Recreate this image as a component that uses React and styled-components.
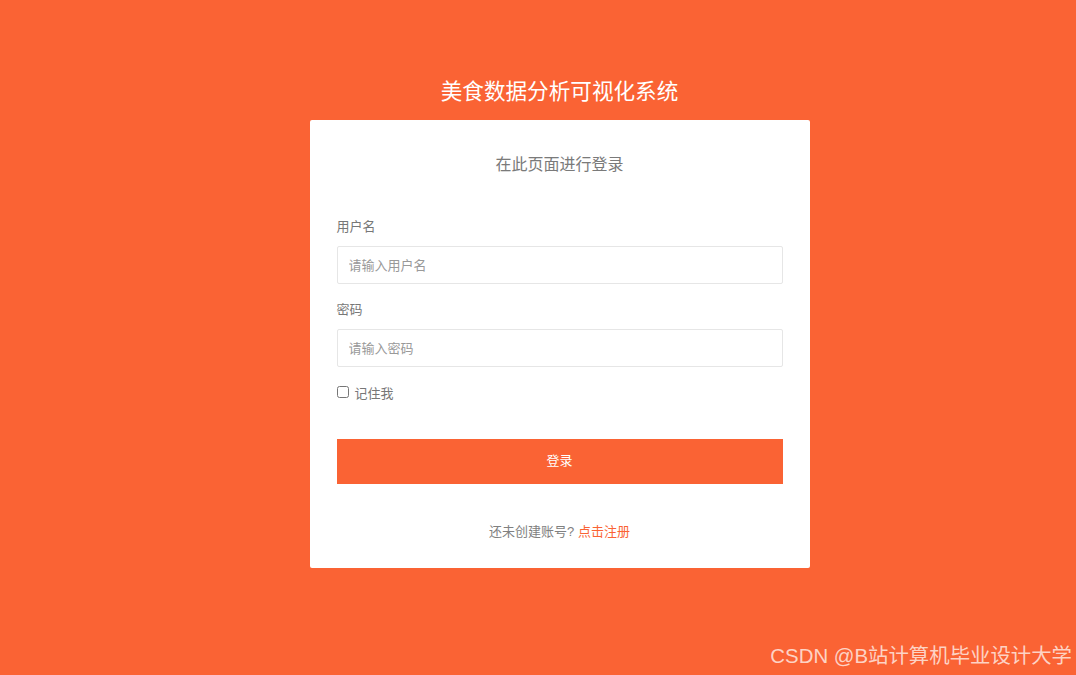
import React, { useState } from 'react';
import styled, { createGlobalStyle } from 'styled-components';

const orange = '#fa6334';

const GlobalStyle = createGlobalStyle`
  html, body {
    margin: 0;
    padding: 0;
    height: 100%;
    background: ${orange};
    font-family: "Liberation Sans", "Noto Sans CJK SC", sans-serif;
  }
  * { box-sizing: border-box; }
`;

const Page = styled.div`
  position: relative;
  width: 100%;
  height: 675px;
  display: flex;
  flex-direction: column;
  align-items: center;
  padding: 77px 0 0 43px;
`;

const Title = styled.h1`
  margin: 0 0 13px;
  font-size: 21.6px;
  line-height: 30px;
  font-weight: normal;
  color: #fff;
`;

const Card = styled.div`
  width: 500px;
  background: #fff;
  border-radius: 2px;
  padding: 31px 27px 26px;
  display: flex;
  flex-direction: column;
`;

const Subtitle = styled.div`
  text-align: center;
  font-size: 16px;
  line-height: 28px;
  color: #7a7a7a;
  margin-bottom: 38px;
`;

const Label = styled.label`
  font-size: 13px;
  line-height: 20px;
  color: #777;
  margin-bottom: 9px;
`;

const Input = styled.input`
  width: 100%;
  height: 38px;
  border: 1px solid #e6e6e6;
  border-radius: 2px;
  padding: 0 11px;
  font-size: 13px;
  font-family: inherit;
  color: #333;
  outline: none;
  margin-bottom: 16px;
  &::placeholder { color: #999; }
`;

const CheckRow = styled.label`
  display: flex;
  align-items: center;
  gap: 6px;
  height: 20px;
  margin-top: -1px;
  font-size: 13px;
  color: #777;
  margin-bottom: 37px;
  cursor: pointer;
`;

const Check = styled.input`
  margin: 0;
  width: 12px;
  height: 12px;
`;

const Button = styled.button`
  width: 100%;
  height: 45px;
  border: none;
  padding: 0 0 4px;
  background: ${orange};
  color: #fff;
  font-size: 13px;
  font-family: inherit;
  cursor: pointer;
  margin-bottom: 38px;
`;

const Footer = styled.div`
  text-align: center;
  font-size: 13px;
  line-height: 20px;
  color: #808080;
  a { color: ${orange}; text-decoration: none; }
`;

const Watermark = styled.div`
  position: absolute;
  right: 4px;
  bottom: 6px;
  font-size: 20.4px;
  color: rgba(255, 255, 255, 0.72);
`;

export default function App() {
  const [remember, setRemember] = useState(false);
  return (
    <>
      <GlobalStyle />
      <Page>
        <Title>美食数据分析可视化系统</Title>
        <Card>
          <Subtitle>在此页面进行登录</Subtitle>
          <Label>用户名</Label>
          <Input placeholder="请输入用户名" />
          <Label>密码</Label>
          <Input type="password" placeholder="请输入密码" />
          <CheckRow>
            <Check type="checkbox" checked={remember} onChange={() => setRemember(v => !v)} />
            记住我
          </CheckRow>
          <Button>登录</Button>
          <Footer>还未创建账号? <a href="#">点击注册</a></Footer>
        </Card>
        <Watermark>CSDN @B站计算机毕业设计大学</Watermark>
      </Page>
    </>
  );
}
